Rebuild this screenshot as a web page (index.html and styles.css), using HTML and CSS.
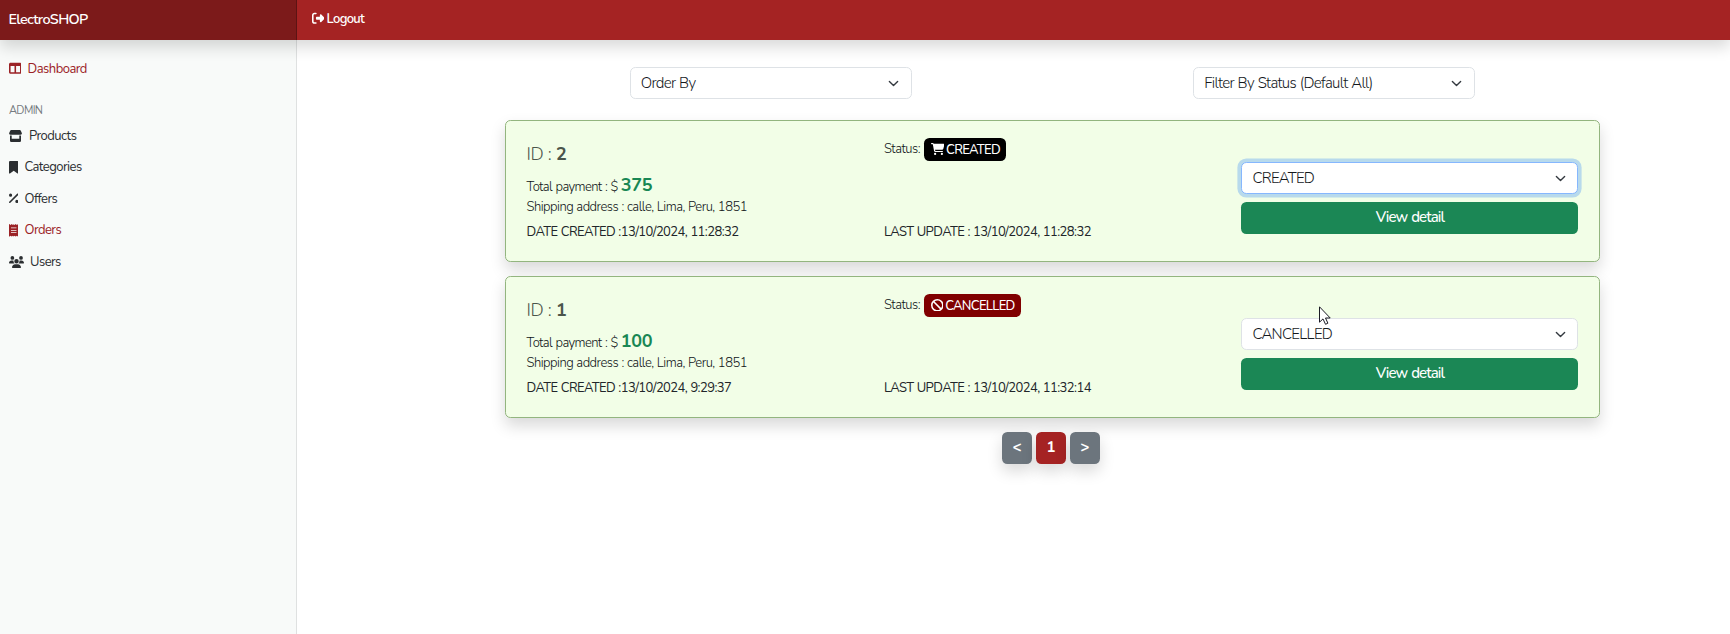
FILE: index.html
```html
<!DOCTYPE html>
<html lang="en">
<head>
<meta charset="utf-8">
<title>ElectroSHOP</title>
<link rel="stylesheet" href="styles.css">
</head>
<body>
<header class="navbar">
  <a class="brand">ElectroSHOP</a>
  <a class="logout"><svg class="icon" viewBox="0 0 512 512"><path d="M377.900 105.900L500.700 228.700c7.200 7.200 11.300 17.100 11.300 27.300s-4.100 20.100-11.300 27.300L377.900 406.100c-6.400 6.400-15 9.900-24 9.900c-18.700 0-33.900-15.200-33.900-33.900l0-62.100-128 0c-17.700 0-32-14.300-32-32l0-64c0-17.700 14.300-32 32-32l128 0 0-62.100c0-18.700 15.200-33.900 33.900-33.900c9 0 17.600 3.600 24 9.900zM160 96L96 96c-17.700 0-32 14.300-32 32l0 256c0 17.700 14.300 32 32 32l64 0c17.700 0 32 14.300 32 32s-14.300 32-32 32l-64 0c-53 0-96-43-96-96L0 128C0 75 43 32 96 32l64 0c17.700 0 32 14.300 32 32s-14.300 32-32 32z"/></svg><span>Logout</span></a>
</header>
<div class="layout">
  <nav class="sidebar">
    <a class="item active dash"><svg class="icon" viewBox="0 0 512 512"><path d="M0 96C0 60.700 28.700 32 64 32H448c35.300 0 64 28.700 64 64V416c0 35.300-28.700 64-64 64H64c-35.300 0-64-28.700-64-64V96zm64 64V416H224V160H64zm384 0H288V416H448V160z"/></svg><span>Dashboard</span></a>
    <h6 class="heading">ADMIN</h6>
    <a class="item products"><svg class="icon store" viewBox="0 0 13 12"><path d="M2.200 0H10.800Q11.400 0 11.700.5L12.800 2.900Q13.300 4.500 11.800 4.800H1.200Q-.3 4.500.2 2.900L1.300.5Q1.600 0 2.200 0zM1 5.600H2.700V8.800H10.300V5.600H12V10.800Q12 12 10.800 12H2.200Q1 12 1 10.800z"/></svg><span>Products</span></a>
    <a class="item categories"><svg class="icon" viewBox="0 0 384 512"><path d="M0 48V487.700C0 501.100 10.900 512 24.300 512c5 0 9.900-1.500 14-4.400L192 400 345.700 507.600c4.100 2.900 9 4.400 14 4.400c13.400 0 24.300-10.900 24.300-24.300V48c0-26.500-21.500-48-48-48H48C21.500 0 0 21.500 0 48z"/></svg><span>Categories</span></a>
    <a class="item offers"><svg class="icon" viewBox="0 0 384 512"><path d="M374.600 118.600c12.500-12.500 12.500-32.800 0-45.300s-32.800-12.500-45.300 0l-320 320c-12.500 12.500-12.500 32.800 0 45.300s32.800 12.500 45.300 0l320-320zM128 128A64 64 0 1 0 0 128a64 64 0 1 0 128 0zM384 384a64 64 0 1 0-128 0 64 64 0 1 0 128 0z"/></svg><span>Offers</span></a>
    <a class="item active orders"><svg class="icon" viewBox="0 0 384 512"><path fill-rule="evenodd" d="M0 12Q0-4 24 5L64 36 112 0 160 36 192 8 224 36 272 0 320 36 360 5Q384-4 384 12V500Q384 516 360 507L320 476 272 512 224 476 192 504 160 476 112 512 64 476 24 507Q0 516 0 500zM80 144V176H304V144zM80 240V272H304V240zM80 336V368H304V336z"/></svg><span>Orders</span></a>
    <a class="item users"><svg class="icon group" viewBox="0 0 640 512"><path d="M144 0a80 80 0 1 1 0 160A80 80 0 1 1 144 0zM512 0a80 80 0 1 1 0 160A80 80 0 1 1 512 0zM0 298.700C0 239.800 47.800 192 106.700 192h42.700c15.900 0 31 3.500 44.600 9.700c-1.300 7.200-1.900 14.700-1.900 22.300c0 38.200 16.800 72.500 43.300 96H21.300C9.600 320 0 310.400 0 298.700zM405.300 320h-.7c26.600-23.500 43.300-57.800 43.300-96c0-7.600-.7-15-1.900-22.300c13.600-6.300 28.700-9.700 44.600-9.700h42.700C592.200 192 640 239.800 640 298.700c0 11.800-9.600 21.300-21.300 21.300H405.300zM224 224a96 96 0 1 1 192 0 96 96 0 1 1-192 0zM128 485.300C128 411.700 187.700 352 261.300 352H378.700C452.300 352 512 411.700 512 485.300c0 14.700-11.900 26.700-26.700 26.700H154.700c-14.700 0-26.700-11.900-26.700-26.700z"/></svg><span>Users</span></a>
  </nav>
  <main class="main">
    <div class="filters">
      <div class="filter"><div class="select"><span>Order By</span><svg class="chevron" viewBox="0 0 16 16"><path d="m2 5 6 6 6-6"/></svg></div></div>
      <div class="filter"><div class="select"><span>Filter By Status (Default All)</span><svg class="chevron" viewBox="0 0 16 16"><path d="m2 5 6 6 6-6"/></svg></div></div>
    </div>
    <section class="card">
      <div class="info">
        <h5 class="order-id">ID : <b>2</b></h5>
        <p class="total"><span class="label">Total payment : $</span><b class="amount">375</b></p>
        <p class="address">Shipping address : calle, Lima, Peru, 1851</p>
        <p class="date">DATE CREATED :13/10/2024, 11:28:32</p>
      </div>
      <div class="state">
        <p class="status"><span>Status:</span><span class="badge created"><svg class="icon" viewBox="0 0 576 512"><path d="M0 24C0 10.700 10.700 0 24 0L69.500 0c22 0 41.500 12.800 50.600 32l411 0c26.300 0 45.500 25 38.600 50.400l-41 152.300c-8.500 31.400-37 53.300-69.500 53.300l-288.500 0 5.400 28.500c2.200 11.300 12.100 19.500 23.600 19.500L488 336c13.300 0 24 10.700 24 24s-10.700 24-24 24l-288.300 0c-34.600 0-64.300-24.600-70.700-58.500L77.400 54.500c-.7-3.800-4-6.500-7.900-6.500L24 48C10.700 48 0 37.300 0 24zM128 464a48 48 0 1 1 96 0 48 48 0 1 1-96 0zm336-48a48 48 0 1 1 0 96 48 48 0 1 1 0-96z"/></svg><span>CREATED</span></span></p>
        <p class="date updated">LAST UPDATE : 13/10/2024, 11:28:32</p>
      </div>
      <div class="actions">
        <div class="select focused"><span>CREATED</span><svg class="chevron" viewBox="0 0 16 16"><path d="m2 5 6 6 6-6"/></svg></div>
        <button class="detail"><span>View detail</span></button>
      </div>
    </section>
    <section class="card">
      <div class="info">
        <h5 class="order-id">ID : <b>1</b></h5>
        <p class="total"><span class="label">Total payment : $</span><b class="amount">100</b></p>
        <p class="address">Shipping address : calle, Lima, Peru, 1851</p>
        <p class="date">DATE CREATED :13/10/2024, 9:29:37</p>
      </div>
      <div class="state">
        <p class="status"><span>Status:</span><span class="badge cancelled"><svg class="icon" viewBox="0 0 512 512"><path d="M367.200 412.500L99.500 144.800C77.100 176.100 64 214.500 64 256c0 106 86 192 192 192c41.500 0 79.900-13.100 111.200-35.500zm45.300-45.300C434.900 335.900 448 297.500 448 256c0-106-86-192-192-192c-41.500 0-79.900 13.100-111.200 35.500L412.500 367.200zM0 256a256 256 0 1 1 512 0A256 256 0 1 1 0 256z"/></svg><span>CANCELLED</span></span></p>
        <p class="date updated">LAST UPDATE : 13/10/2024, 11:32:14</p>
      </div>
      <div class="actions">
        <div class="select"><span>CANCELLED</span><svg class="chevron" viewBox="0 0 16 16"><path d="m2 5 6 6 6-6"/></svg></div>
        <button class="detail"><span>View detail</span></button>
      </div>
    </section>
    <div class="pager">
      <button class="page">&lt;</button><button class="page current">1</button><button class="page">&gt;</button>
    </div>
  </main>
</div>
<svg class="cursor" viewBox="0 0 12 19"><path d="M.5.8V16.200L4 12.900 6.500 18.300 8.900 17.200 6.500 12H11.200z"/></svg>
</body>
</html>
```

FILE: styles.css
```css
* { box-sizing: border-box; }
body {
  margin: 0;
  height: 634px;
  overflow: hidden;
  display: flex;
  flex-direction: column;
  background: #fff;
  color: #212529;
  font-family: Nunito, Lato, "Open Sans", sans-serif;
  font-size: 14.4px;
  line-height: 21.600px;
}
h5, h6, p { margin: 0; font-weight: 400; }
button { font: inherit; border: 0; padding: 0; }
.icon { display: block; height: 12.600px; fill: currentColor; flex: none; }

.navbar {
  display: flex;
  flex: none;
  height: 40px;
  background: #a52323;
  color: #fff;
  box-shadow: 0 7.200px 14.400px rgba(0, 0, 0, .15);
  position: relative;
  z-index: 1;
}
.brand {
  width: 297px;
  padding: 8.500px 8.500px 7px;
  background: #7c1a1a;
  box-shadow: inset -1px 0 0 rgba(0, 0, 0, .25);
  font-weight: 600;
  letter-spacing: -.65px;
}
.logout { display: flex; align-items: center; gap: 2.500px; padding: 0 14px 3px 14.500px; font-size: 13px; font-weight: 600; letter-spacing: -.7px; }
.logout span { padding-top: 2.500px; }

.layout { display: flex; flex: 1; }
.sidebar {
  width: 297px;
  padding-top: 13px;
  background: #f8faf9;
  border-right: 1px solid #dfe1e1;
  color: #2b2e31;
  font-size: 13px;
  letter-spacing: -.53px;
}
.item { display: flex; align-items: center; height: 31.500px; padding-left: 8.500px; gap: 6.500px; }
.item span { padding-top: 2px; }
.item.active { color: #9b2226; }
.heading { margin-top: 19.500px; padding-left: 9px; height: 14px; line-height: 14px; font-size: 11px; letter-spacing: -.65px; color: #757b80; }
.products { margin-top: 2px; gap: 7.500px; }
.store, .group { height: 12px; }

.main { flex: 1; padding: 27px 130px 0 208px; }
.filters { display: flex; margin: 0 -16px 21px; }
.filter { width: 50%; display: flex; justify-content: center; }
.filter .select { width: 282px; }
.select {
  display: flex;
  align-items: center;
  justify-content: space-between;
  height: 32px;
  padding: 0 12px 0 10px;
  background: #fff;
  border: 1px solid #dee2e6;
  border-radius: 5.400px;
  color: #14181c;
  font-size: 15px;
  font-weight: 300;
  letter-spacing: -.7px;
  word-spacing: .7px;
}
.actions .select { padding-right: 11px; }
.select span { padding-top: 1px; }
.select.focused { border-color: #86b7fe; box-shadow: 0 0 0 3.600px rgba(13, 110, 253, .25); }
.chevron { width: 11px; height: 11px; margin-top: 1px; fill: none; stroke: #343a40; stroke-width: 2; stroke-linecap: round; stroke-linejoin: round; }

.card {
  display: grid;
  grid-template-columns: repeat(3, 1fr);
  column-gap: 20.400px;
  height: 142px;
  margin-bottom: 14px;
  padding: 16px 20.500px 0;
  background: #f2fee7;
  border: 1px solid #93b57f;
  border-radius: 5.400px;
  box-shadow: 0 7.200px 14.400px rgba(0, 0, 0, .15);
  font-size: 13px;
  letter-spacing: -.5px;
}
.order-id { margin-top: 6px; font-size: 18px; line-height: 22px; font-weight: 300; word-spacing: .7px; color: #4b554b; }
.order-id b { font-weight: 700; }
.total, .address, .status { font-weight: 300; color: #0f1417; }
.total { display: flex; align-items: baseline; gap: 3px; margin-top: 10px; line-height: 21px; }
.label { letter-spacing: -.6px; word-spacing: .7px; }
.amount { font-size: 18px; font-weight: 700; letter-spacing: -.4px; color: #198754; }
.address { line-height: 19px; word-spacing: .4px; }
.date { margin-top: 6px; line-height: 19px; letter-spacing: -.57px; word-spacing: .4px; }
.status { display: flex; align-items: center; gap: 4px; height: 24px; }
.status span { padding-top: 2px; }
.status .badge { display: flex; align-items: center; gap: 2px; height: 23px; padding: 0 6.500px; border-radius: 5.400px; color: #fff; font-weight: 500; letter-spacing: -.7px; }
.status .badge span { padding-top: 3px; }
.badge.created { background: #000; }
.badge.created .icon { height: 12px; }
.badge.cancelled { background: #800000; }
.updated { margin-top: 62px; letter-spacing: -.57px; }
.actions { display: flex; flex-direction: column; gap: 7.500px; padding-top: 25px; }
.detail { height: 32px; border-radius: 5.400px; background: #1b8755; color: #fff; font-size: 15px; font-weight: 500; letter-spacing: -.9px; word-spacing: 1px; }

.pager { display: flex; justify-content: center; gap: 3.600px; padding-right: 3px; }
.page { width: 30.400px; height: 32px; border-radius: 5.400px; background: #6c757d; color: #fff; font-size: 15px; font-weight: 700; box-shadow: 0 7.200px 14.400px rgba(0, 0, 0, .15); }
.page.current { background: #a52323; }

.cursor { position: absolute; left: 1319px; top: 306px; width: 12px; height: 19px; fill: #fff; stroke: #1b1b25; stroke-width: 1; }
```
